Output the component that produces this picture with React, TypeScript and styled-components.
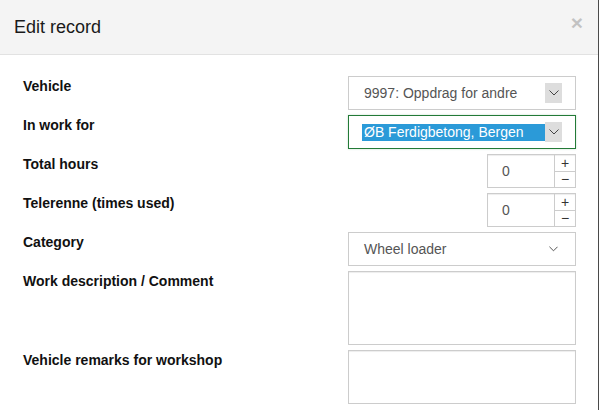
import React from "react";
import styled, { createGlobalStyle } from "styled-components";

const GlobalStyle = createGlobalStyle`
  html, body {
    margin: 0;
    padding: 0;
    background: #ffffff;
  }
  body {
    font-family: "Liberation Sans", Arial, sans-serif;
  }
`;

const Modal = styled.div`
  width: 599px;
  height: 410px;
  box-sizing: border-box;
  border-right: 1px solid #4a4a4a;
  background: #fff;
  overflow: hidden;
`;

const ModalHeader = styled.div`
  display: flex;
  justify-content: space-between;
  align-items: flex-start;
  height: 55px;
  box-sizing: border-box;
  padding: 17px 15px 0 14px;
  background: #f4f4f4;
  border-bottom: 1px solid #e2e2e2;
`;

const Title = styled.h4`
  margin: 0;
  font-size: 18px;
  line-height: 20px;
  font-weight: normal;
  color: #1a1a1a;
`;

const Close = styled.button`
  margin-top: -5px;
  padding: 0;
  border: 0;
  background: transparent;
  font-family: "Liberation Sans", Arial, sans-serif;
  font-size: 21px;
  font-weight: bold;
  line-height: 1;
  color: #000;
  opacity: 0.2;
  cursor: pointer;
`;

const Body = styled.div`
  display: grid;
  grid-template-columns: 1fr 228px;
  row-gap: 5px;
  padding: 21px 22px 0 23px;
`;

const Label = styled.label`
  font-size: 14px;
  line-height: 20px;
  font-weight: bold;
  color: #111;
  align-self: start;
`;

const SelectBox = styled.div<{ $focused?: boolean }>`
  display: flex;
  align-items: center;
  height: 34px;
  box-sizing: border-box;
  padding: 0 13px;
  border: 1px solid ${(p) => (p.$focused ? "#237a37" : "#cccccc")};
  box-shadow: ${(p) => (p.$focused ? "0 0 2px rgba(35,122,55,0.25)" : "none")};
  background: #fff;
  font-size: 14px;
  color: #555;
`;

const SelectValue = styled.span<{ $selected?: boolean }>`
  flex: 1;
  height: 17px;
  line-height: 17px;
  padding: 0 2px;
  white-space: nowrap;
  background: ${(p) => (p.$selected ? "#2b9ad8" : "transparent")};
  color: ${(p) => (p.$selected ? "#fff" : "#555")};
`;

const ArrowButton = styled.span<{ $plain?: boolean }>`
  display: flex;
  align-items: center;
  justify-content: center;
  width: 17px;
  height: 20px;
  background: ${(p) => (p.$plain ? "transparent" : "#dddddd")};
`;

const Chevron = ({ width = 10 }: { width?: number }) => (
  <svg width={width} height={6} viewBox="0 0 10 6">
    <path d="M0.5 0.5 L5 5 L9.5 0.5" fill="none" stroke="#444" strokeWidth="1" />
  </svg>
);

const Spinner = styled.div`
  justify-self: end;
  display: flex;
  width: 89px;
  height: 34px;
  box-sizing: border-box;
  border: 1px solid #cccccc;
  box-shadow: inset 0 1px 1px rgba(0, 0, 0, 0.075);
`;

const SpinInput = styled.div`
  flex: 1;
  display: flex;
  align-items: center;
  padding-left: 14px;
  font-size: 14px;
  color: #555;
`;

const SpinButtons = styled.div`
  width: 20px;
  display: flex;
  flex-direction: column;
  border-left: 1px solid #cccccc;
`;

const SpinButton = styled.span<{ $top?: boolean }>`
  flex: 1;
  display: flex;
  align-items: center;
  justify-content: center;
  font-size: 14px;
  line-height: 1;
  color: #333;
  border-bottom: ${(p) => (p.$top ? "1px solid #cccccc" : "0")};
`;

const TextArea = styled.div<{ $h: number }>`
  height: ${(p) => p.$h}px;
  box-sizing: border-box;
  border: 1px solid #cccccc;
  box-shadow: inset 0 1px 1px rgba(0, 0, 0, 0.075);
`;

const App = (): React.ReactElement => {
  return (
    <>
      <GlobalStyle />
      <Modal>
        <ModalHeader>
          <Title>Edit record</Title>
          <Close>×</Close>
        </ModalHeader>
        <Body>
          <Label>Vehicle</Label>
          <SelectBox>
            <SelectValue>9997: Oppdrag for andre</SelectValue>
            <ArrowButton>
              <Chevron />
            </ArrowButton>
          </SelectBox>

          <Label>In work for</Label>
          <SelectBox $focused>
            <SelectValue $selected>ØB Ferdigbetong, Bergen</SelectValue>
            <ArrowButton>
              <Chevron />
            </ArrowButton>
          </SelectBox>

          <Label>Total hours</Label>
          <Spinner>
            <SpinInput>0</SpinInput>
            <SpinButtons>
              <SpinButton $top>+</SpinButton>
              <SpinButton>−</SpinButton>
            </SpinButtons>
          </Spinner>

          <Label>Telerenne (times used)</Label>
          <Spinner>
            <SpinInput>0</SpinInput>
            <SpinButtons>
              <SpinButton $top>+</SpinButton>
              <SpinButton>−</SpinButton>
            </SpinButtons>
          </Spinner>

          <Label>Category</Label>
          <SelectBox>
            <SelectValue>Wheel loader</SelectValue>
            <ArrowButton $plain>
              <Chevron width={9} />
            </ArrowButton>
          </SelectBox>

          <Label>Work description / Comment</Label>
          <TextArea $h={74} />

          <Label>Vehicle remarks for workshop</Label>
          <TextArea $h={54} />
        </Body>
      </Modal>
    </>
  );
};

export default App;
